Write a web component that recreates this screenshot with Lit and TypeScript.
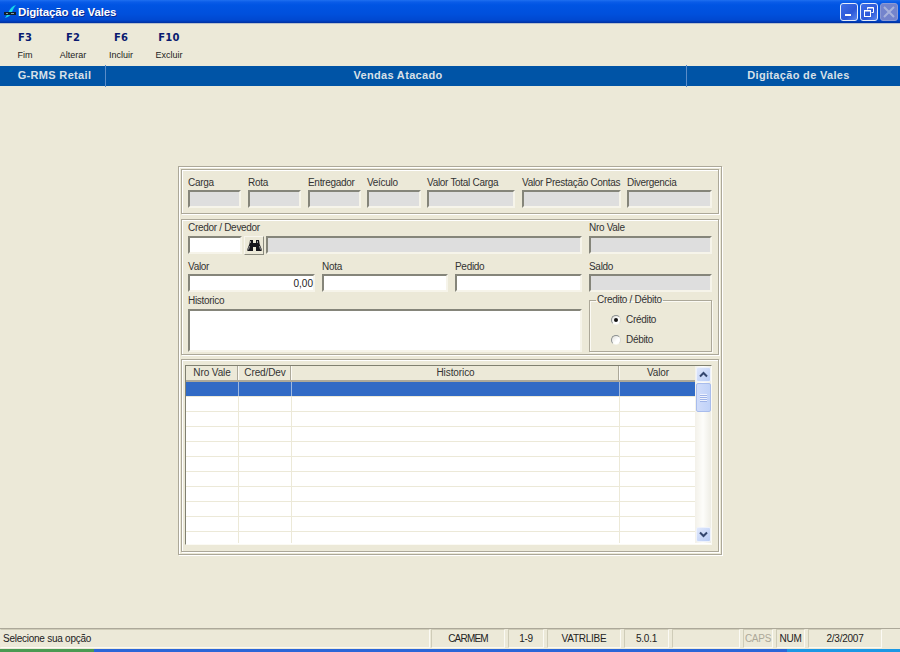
import { LitElement, html, css, svg } from "lit";
import { customElement } from "lit/decorators.js";

const tools = [["F3", "Fim"], ["F2", "Alterar"], ["F6", "Incluir"], ["F10", "Excluir"]];
const top = ["Carga", "Rota", "Entregador", "Veículo", "Valor Total Carga", "Valor Prestação Contas", "Divergencia"];
const status = [
  ["CARMEM", "s1", ""], ["1-9", "s2", ""], ["VATRLIBE", "s3", ""], ["5.0.1", "s4", ""],
  ["", "s5", ""], ["CAPS", "s6", "off"], ["NUM", "s7", ""], ["2/3/2007", "s8", ""],
];

const binoculars = svg`<svg width="15" height="13" viewBox="0 0 15 13">
  <path d="M3 1h3v3h3V1h3l.6 4 2 5V12H9V8H6v4H.4v-2l2-5z" fill="#16161c"/>
  <path d="M3.500 2v2M10.500 2v2M2.500 7 1.500 10.500M12.500 7l1 3.500" stroke="#9c9c9c" stroke-width="1" fill="none"/>
</svg>`;

const appIcon = svg`<svg width="15" height="16" viewBox="0 0 15 16">
  <path d="M13 1C9 2 7 5 5.500 8 4.500 10 3.500 12 2 14c4-1 6-3 7-6 1-2 2-5 4-7z" fill="#16d4e8"/>
  <rect x="1" y="8" width="12" height="3" fill="#10202c"/>
  <rect x="3" y="9" width="2" height="1" fill="#7fa0a8"/><rect x="8" y="9" width="3" height="1" fill="#7fa0a8"/>
</svg>`;

@customElement("app-root")
export class AppRoot extends LitElement {
  static styles = css`
    :host { display: block; width: 900px; height: 652px; overflow: hidden; }
    * { box-sizing: border-box; }
    .app { width: 900px; height: 652px; display: flex; flex-direction: column; background: #ece9d8;
      font: 10px/12px "Liberation Sans", Arial, sans-serif; color: #222; }

    .title { height: 24px; flex: none; display: flex; align-items: center; padding: 1px 2px 0 3px;
      background: linear-gradient(#1f6ff0 0, #0a5ce8 2px, #0054e3 5px, #0050dc 14px, #0048d0 20px, #0038b0 22px, #00309c 23px);
      border-bottom: 1px solid #b8c0cc; }
    .title svg { flex: none; }
    .ttext { flex: 1; font: bold 11.5px/16px "Liberation Sans", sans-serif; letter-spacing: -0.15px; color: #fff; text-shadow: 1px 1px 0 #0a2a90; }
    .wbtn { width: 18px; height: 18px; margin-left: 2px; border: 1px solid #e6ecfa; border-radius: 3px; flex: none;
      background: linear-gradient(135deg, #3e6ee6, #2c58d8 60%, #5c88ee); display: flex; align-items: center; justify-content: center; }
    .wbtn.dis { background: #7484cc; border-color: #8c9ad4; }

    .tools { height: 42px; flex: none; display: flex; padding-left: 1px; }
    .tool { width: 48px; display: flex; flex-direction: column; align-items: center; padding-top: 8px; }
    .key { font: bold 10px/12px "DejaVu Sans", sans-serif; letter-spacing: 0.2px; color: #0a1a70; }
    .cap { margin-top: 5px; font-size: 9px; line-height: 12px; color: #222; }

    .band { height: 20px; flex: none; display: grid; grid-template-columns: 106px 581px 213px; background: #0054a6;
      font: bold 11px/19px "Liberation Sans", sans-serif; letter-spacing: 0.33px; color: #d8e0e8; text-align: center; }
    .band div { position: relative; }
    .band div:nth-child(2) { padding-left: 3px; }
    .band div:nth-child(3) { padding-left: 10px; }
    .band div:not(:last-child)::after { content: ""; position: absolute; right: 0; top: -1px; bottom: -1px; width: 1px; background: #5a8cc8; }
    .band div:first-child { padding-left: 3px; }

    .main { flex: 1; padding: 80px 0 0 178px; }
    .frame { width: 544px; height: 389px; padding: 2px; border: 1px solid #aca899; box-shadow: inset 1px 1px 0 #fff, 1px 1px 0 #fff;
      display: flex; flex-direction: column; }
    .group { width: 538px; border: 1px solid #aca899; box-shadow: inset 1px 1px 0 #fff, 1px 1px 0 #fff; flex: none; }
    .g1 { height: 45px; padding: 6px 0 0 6px; display: grid; grid-template-columns: 60px 60px 59px 60px 95px 105px 85px; }
    .g1 .f { padding-right: 7px; }
    .g1 .f:nth-child(3), .g1 .f:nth-child(4), .g1 .f:nth-child(6) { padding-right: 6px; }
    .g1 .f:last-child { padding-right: 0; }
    label { display: block; height: 14px; font-size: 10px; line-height: 13px; letter-spacing: -0.3px; color: #333; white-space: nowrap; }

    .in { display: block; height: 18px; background: #fff; border: 2px solid; border-color: #85857a #f6f4ea #f6f4ea #85857a; font-size: 10px; line-height: 15px; text-align: right; color: #222; }
    .ro { background: #dedede; }
    .g2 { height: 136px; margin-top: 5px; padding: 2px 0 0 6px; display: grid; grid-template-columns: 394px 123px; column-gap: 7px; grid-template-rows: 37px 35px 1fr; }
    .first { margin-top: -1px; height: 15px; }
    .credor { display: flex; }
    .credor .in:first-child { width: 54px; }
    .bino { width: 20px; height: 19px; margin-left: 2px; background: #ece9d8; border: 1px solid; border-color: #f8f6ee #8a8a7e #8a8a7e #f8f6ee; display: flex; align-items: center; justify-content: center; }
    .credor .in:last-child { width: 316px; margin-left: 2px; }
    .trio { display: grid; grid-template-columns: 127px 126px 127px; column-gap: 7px; }
    .trio label, .lab2 { height: 15px; padding-top: 1px; }
    .hist label { height: 15px; }
    .hist .in { height: 43px; }
    .cd { margin: 0; padding: 0 0 0 21px; height: 58px; border: 1px solid #aca899; box-shadow: inset 1px 1px 0 #fbfaf4, 1px 1px 0 #fbfaf4; min-width: 0; width: 123px; }
    .cd legend { padding: 0 1px; margin-left: -15px; font-size: 10px; line-height: 12px; letter-spacing: -0.3px; color: #333; }
    .radio { display: flex; align-items: center; height: 12px; margin-top: 8px; gap: 5px; color: #333; letter-spacing: -0.3px; }
    .radio + .radio { margin-top: 8px; }
    .radio i { display: flex; align-items: center; justify-content: center; width: 10px; height: 10px; border-radius: 50%; border: 1px solid; border-color: #8a8f90 #dcdcd4 #f6f6ee #8a8f90; background: linear-gradient(135deg, #deded8, #fff 60%); }
    .radio i.on::after { content: ""; width: 4px; height: 4px; border-radius: 50%; background: #111; }

    .g3 { height: 193px; margin-top: 4px; padding: 5px 0 0 3px; }
    .grid { width: 527px; height: 180px; border: 1px solid; border-color: #808070 #fbfaf4 #fbfaf4 #808070; background: #fff; display: flex; }
    .tbl { width: 510px; height: 177px; overflow: hidden; }
    .row { display: grid; grid-template-columns: 53px 53px 328px 76px; height: 15px; border-bottom: 1px solid #ece9d8; }
    .row > div { border-right: 1px solid #ece9d8; }
    .row > div:last-child { border-right: 0; }
    .head { height: 16px; background: #ece9d8; border-bottom: 2px solid #aca899; text-align: center; line-height: 14px; letter-spacing: -0.1px; color: #333; }
    .head > div { border-right: 1px solid #fbfaf4; box-shadow: inset -1px 0 0 #aca899; }
    .sel { background: #316ac5; height: 15px; }
    .sel > div { border-right-color: #9db8e0; }
    .sb { width: 16px; height: 177px; padding: 1px 0 1px 1px; background: linear-gradient(90deg, #f3f1ea, #fdfdfa 50%, #eeede5); display: flex; flex-direction: column; }
    .arrow { width: 15px; height: 15px; flex: none; border: 1px solid #eef2fb; border-radius: 2px; background: linear-gradient(135deg, #e0e8fc, #b8ccf6); display: flex; align-items: center; justify-content: center; }
    .thumb { width: 15px; height: 29px; margin-top: 1px; border: 1px solid #a8bcec; border-radius: 2px; background: linear-gradient(90deg, #d0dcfa, #c0d2f8); display: flex; flex-direction: column; align-items: center; justify-content: center; gap: 1px; }
    .thumb b { width: 7px; height: 1px; background: #eef2fd; box-shadow: 0 1px 0 #9fb4e8; }
    .sp { flex: 1; }

    .status { height: 21px; flex: none; display: flex; border-top: 1px solid #aca899; }
    .p { height: 19px; margin-left: 3px; border: 1px solid; border-color: #cfccb8 #fbfaf4 #fbfaf4 #cfccb8; text-align: center; font-size: 10px; line-height: 17px; letter-spacing: -0.25px; color: #222; white-space: nowrap; }
    .p0 { width: 430px; margin-left: 0; text-align: left; padding-left: 2px; border-left-color: #ece9d8; }
    .s1 { width: 74px; margin-left: 1px; letter-spacing: -0.8px; } .s2 { width: 36px; } .s3 { width: 74px; } .s4 { width: 45px; }
    .s5 { width: 68px; } .s6 { width: 30px; } .s7 { width: 29px; } .s8 { width: 74px; }
    .off { color: #aca899; }
    .task { height: 3px; flex: none; display: grid; grid-template-columns: 94px 693px 113px; }
    .task i:nth-child(1) { background: #4a9a52; }
    .task i:nth-child(2) { background: #2a66d8; }
    .task i:nth-child(3) { background: #1c98e4; }
  `;

  render() {
    return html`<div class="app">
      <div class="title">
        ${appIcon}
        <div class="ttext">Digitação de Vales</div>
        <div class="wbtn"><svg width="10" height="10"><rect x="1" y="7" width="6" height="2" fill="#fff"/></svg></div>
        <div class="wbtn"><svg width="12" height="12" fill="none" stroke="#fff"><path d="M4.500 3.500V1.500h6v5h-2"/><rect x="1.500" y="4.500" width="6" height="6"/><path d="M4.500 2h6M1.500 5h6"/></svg></div>
        <div class="wbtn dis"><svg width="12" height="12" stroke="#a8b2dc" stroke-width="2"><path d="M1 1l10 10M11 1L1 11"/></svg></div>
      </div>
      <div class="tools">
        ${tools.map(([k, c]) => html`<div class="tool"><div class="key">${k}</div><div class="cap">${c}</div></div>`)}
      </div>
      <div class="band"><div>G-RMS Retail</div><div>Vendas Atacado</div><div>Digitação de Vales</div></div>
      <div class="main">
        <div class="frame">
          <div class="group g1">
            ${top.map((t) => html`<div class="f"><label>${t}</label><div class="in ro"></div></div>`)}
          </div>
          <div class="group g2">
            <div>
              <label class="first">Credor / Devedor</label>
              <div class="credor"><div class="in"></div><div class="bino">${binoculars}</div><div class="in ro"></div></div>
            </div>
            <div><label class="first">Nro Vale</label><div class="in ro"></div></div>
            <div class="trio">
              <div><label>Valor</label><div class="in">0,00</div></div>
              <div><label>Nota</label><div class="in"></div></div>
              <div><label>Pedido</label><div class="in"></div></div>
            </div>
            <div><label class="lab2">Saldo</label><div class="in ro"></div></div>
            <div class="hist"><label>Historico</label><div class="in"></div></div>
            <fieldset class="cd">
              <legend>Credito / Débito</legend>
              <div class="radio"><i class="on"></i>Crédito</div>
              <div class="radio"><i></i>Débito</div>
            </fieldset>
          </div>
          <div class="group g3">
            <div class="grid">
              <div class="tbl">
                <div class="row head"><div>Nro Vale</div><div>Cred/Dev</div><div>Historico</div><div>Valor</div></div>
                <div class="row sel"><div></div><div></div><div></div><div></div></div>
                ${Array.from({ length: 10 }, () => html`<div class="row"><div></div><div></div><div></div><div></div></div>`)}
              </div>
              <div class="sb">
                <div class="arrow"><svg width="9" height="7" fill="none" stroke="#33466e" stroke-width="2"><path d="M1 5.500l3.500-3.500 3.500 3.500"/></svg></div>
                <div class="thumb"><b></b><b></b><b></b><b></b></div>
                <div class="sp"></div>
                <div class="arrow"><svg width="9" height="7" fill="none" stroke="#33466e" stroke-width="2"><path d="M1 1.500l3.500 3.500 3.500-3.500"/></svg></div>
              </div>
            </div>
          </div>
        </div>
      </div>
      <div class="status">
        <div class="p p0">Selecione sua opção</div>
        ${status.map(([t, c, o]) => html`<div class="p ${c} ${o}">${t}</div>`)}
      </div>
      <div class="task"><i></i><i></i><i></i></div>
    </div>`;
  }
}
